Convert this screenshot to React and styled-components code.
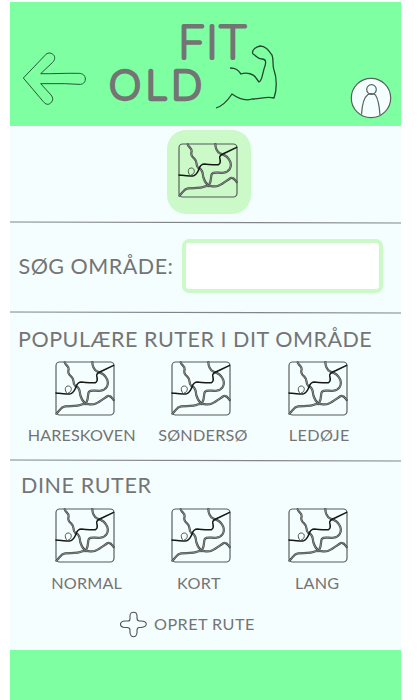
import React from "react";
import styled, { createGlobalStyle } from "styled-components";

const Global = createGlobalStyle`
  *, *::before, *::after { box-sizing: border-box; }
  body { margin: 0; background: #fff; font-family: Lato, "Open Sans", sans-serif; color: #747474; }
  svg { display: block; flex: none; }
`;

const Screen = styled.div`
  width: 391px;
  height: 698px;
  margin: 2px 0 0 10px;
  display: flex;
  flex-direction: column;
  overflow: hidden;
  background: #f5feff;
`;

const Header = styled.header`
  height: 123.5px;
  flex: none;
  display: flex;
  align-items: flex-start;
  background: #7effa2;
`;

const BackButton = styled.button`
  margin: 49px 0 0 12px;
  padding: 0;
  border: 0;
  background: none;
`;

const Logo = styled.svg`
  margin: 10px 0 0 12px;
  overflow: visible;
  font-family: Lato, sans-serif;
  font-weight: 100;
  fill: #747474;
  stroke: #747474;
  stroke-linejoin: round;
`;

const ProfileButton = styled(BackButton)`
  margin: 75px 0 0 70.5px;
`;

const Featured = styled.section`
  height: 95px;
  flex: none;
  display: flex;
  justify-content: center;
  padding: 4px 0 0 7px;
`;

const FeaturedTile = styled.div`
  width: 84px;
  height: 84px;
  border-radius: 19px;
  background: #cbf9c8;
  padding: 13px 0 0 11px;
`;

const SearchRow = styled.section`
  height: 87px;
  flex: none;
  display: flex;
  align-items: flex-start;
  padding: 15.5px 0 0 9px;
`;

const SearchLabel = styled.label`
  width: 163px;
  margin-top: 13px;
  margin-left: -0.5px;
  margin-right: 0.5px;
  font-size: 21.5px;
  line-height: 28px;
  letter-spacing: ${(p) => p.$track}px;
  white-space: nowrap;
`;

const SearchInput = styled.input`
  width: 201px;
  height: 54px;
  border: 4px solid #cbf9c8;
  border-radius: 7px;
  background: #fff;
  outline: none;
`;

const RouteSection = styled.section`
  height: ${(p) => p.$height}px;
  flex: none;
  display: flex;
  flex-direction: column;
`;

const Heading = styled.h2`
  margin: ${(p) => p.$top}px 0 0 ${(p) => p.$left}px;
  font-size: 21.5px;
  line-height: 28px;
  font-weight: 400;
  letter-spacing: ${(p) => p.$track}px;
  white-space: nowrap;
`;

const RouteGrid = styled.div`
  display: grid;
  grid-template-columns: repeat(3, 116.3px);
  margin: ${(p) => p.$top}px 0 0 17px;
`;

const Route = styled.div`
  display: flex;
  flex-direction: column;
  align-items: center;
`;

const RouteName = styled.span`
  margin: ${(p) => p.$top}px 0 0 ${(p) => p.$shift || 0}px;
  font-size: 16.2px;
  line-height: 20px;
  letter-spacing: ${(p) => p.$track}px;
  white-space: nowrap;
`;

const CreateRoute = styled.button`
  display: flex;
  align-items: center;
  gap: 7px;
  margin: 18px 0 0 110px;
  padding: 0;
  border: 0;
  background: none;
  color: inherit;
  font: 400 16.2px/26px Lato, sans-serif;
  letter-spacing: 0.45px;
  white-space: nowrap;
`;

const Footer = styled.footer`
  flex: 1;
  background: #7effa2;
`;

const Rule = () => (
  <svg width="391" height="3" viewBox="0 0 391 3">
    <path d="M0 1L391 2" stroke="#838689" strokeWidth="1.1" />
  </svg>
);

const roads = [
  "M29 4C31 13 42 15 41 25C36 37 43 42 49 47C57 54 55 62 57 69L63 78",
  "M112 3C112 14 115 25 127 32C142 36 152 44 157 57C162 73 154 86 137 89C122 91 108 85 102 92C97 100 101 112 95 122L92 129",
  "M64 76C73 80 75 91 76 103C79 115 84 122 92 129",
  "M4 158C14 151 16 138 30 136C46 134 66 138 82 130C95 125 107 134 121 128C135 122 147 112 158 105C167 102 170 109 176 117",
];

const MapIcon = () => (
  <svg width="60" height="55" viewBox="0 0 180 165" fill="none" strokeLinecap="round" strokeLinejoin="round">
    <rect x="3" y="3" width="174" height="159" rx="11" stroke="#555b58" strokeWidth="3.5" />
    {roads.map((d) => (
      <g key={d}>
        <path d={d} stroke="#454945" strokeWidth="6.6" />
        <path d={d} stroke="#989f9a" strokeWidth="2.4" />
      </g>
    ))}
    <path
      d="M3 96C20 98 36 101 47 98C57 95 60 86 63 78C66 68 70 63 80 63C94 64 111 67 121 65C130 62 127 52 125 44C124 35 137 32 147 27L176 13"
      stroke="#161816"
      strokeWidth="4.5"
    />
    <path d="M36 97C28 88 29 75 40 75C52 75 52 93 40 96" stroke="#4b504d" strokeWidth="3" />
  </svg>
);

const BackArrow = () => (
  <svg width="65" height="56" viewBox="0 0 195 168" fill="none" stroke="#183e23" strokeWidth="2.6" strokeLinejoin="round">
    <path d="M4 81L69 13C76 4 86 4 94 11C101 18 98 28 92 34L56 68C90 69 131 66 170 67C183 67 190 74 190 84C190 95 182 101 171 100L127 98L56 98L87 132C94 140 94 149 86 156C78 163 71 160 64 152Z" />
  </svg>
);

const BrandLogo = () => (
  <Logo width="180" height="100" viewBox="-10 -8 180 100">
    <text x="69.5" y="37.8" fontSize="45" strokeWidth="4.2" textLength="67" lengthAdjust="spacing">FIT</text>
    <text x="0.5" y="79.3" fontSize="39.5" strokeWidth="4.4" textLength="92" lengthAdjust="spacing">OLD</text>
    <path
      d="M121 48C127 48 129 50 132 54C138 52 145 54 147 58L150 62C153 61 153 56 155 49C157 44 158 39 153 39C148 39 148 36 144 34C142 30 147 27 151 26C157 26 160 31 163 35C165 40 163 44 165 50C168 58 168 70 165 78C157 76 152 79 143 79C137 81 130 79 123 74C119 80 114 86 107 88"
      fill="none"
      stroke="#24472e"
      strokeWidth="1.3"
    />
  </Logo>
);

const ProfileIcon = () => (
  <svg width="42" height="42" viewBox="0 0 42 42" fill="none" stroke="#56635c" strokeWidth="1.2">
    <circle cx="21" cy="21" r="19.7" fill="#f5feff" />
    <circle cx="21.5" cy="12.5" r="4.8" />
    <path d="M11.5 37.5C12 28 14.5 20 18 17.5C20 16.5 23.5 16.5 25.5 18C28 22 29.5 31 30 38" />
  </svg>
);

const PlusIcon = () => (
  <svg width="27" height="27" viewBox="0 0 27 27" fill="none" stroke="#4d5251" strokeWidth="1.1">
    <path d="M10 8V5C10 0 17 0 17 5V7C17 9 17.5 10 19.5 10H21C28 10 28 16 21 16.5H19C17 16.5 17 18 17 20V22C16 27 11 27 10 22V19C10 17 9 16.5 7 16.5H5C-1 16 -1 10.5 5 10H8Q10 10 10 8Z" />
  </svg>
);

const popular = [
  { name: "HARESKOVEN", track: 0.1, shift: -7 },
  { name: "SØNDERSØ", track: 0.25, shift: 3 },
  { name: "LEDØJE", track: 0.4, shift: 3 },
];
const own = [
  { name: "NORMAL", track: 0.15, shift: 3 },
  { name: "KORT", track: 0.4, shift: -5 },
  { name: "LANG", track: 0.2, shift: -1 },
];

const Routes = ({ items, top, labelTop }) => (
  <RouteGrid $top={top}>
    {items.map((r) => (
      <Route key={r.name}>
        <MapIcon />
        <RouteName $top={labelTop} $track={r.track} $shift={r.shift}>{r.name}</RouteName>
      </Route>
    ))}
  </RouteGrid>
);

export default function App() {
  return (
    <>
      <Global />
      <Screen>
        <Header>
          <BackButton aria-label="Tilbage"><BackArrow /></BackButton>
          <BrandLogo />
          <ProfileButton aria-label="Profil"><ProfileIcon /></ProfileButton>
        </Header>
        <Featured>
          <FeaturedTile><MapIcon /></FeaturedTile>
        </Featured>
        <Rule />
        <SearchRow>
          <SearchLabel htmlFor="area" $track={0.5}>SØG OMRÅDE:</SearchLabel>
          <SearchInput id="area" />
        </SearchRow>
        <Rule />
        <RouteSection $height={145}>
          <Heading $top={11} $left={8} $track={0.53}>POPULÆRE RUTER I DIT OMRÅDE</Heading>
          <Routes items={popular} top={8} labelTop={9.5} />
        </RouteSection>
        <Rule />
        <RouteSection $height={188.5}>
          <Heading $top={9} $left={11} $track={0.6}>DINE RUTER</Heading>
          <Routes items={own} top={9} labelTop={10} />
          <CreateRoute><PlusIcon />OPRET RUTE</CreateRoute>
        </RouteSection>
        <Footer />
      </Screen>
    </>
  );
}
